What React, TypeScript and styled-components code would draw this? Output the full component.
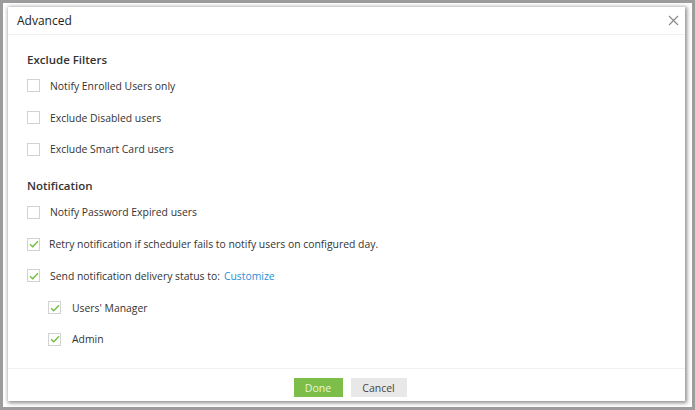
import styled, { createGlobalStyle } from 'styled-components';

const GlobalStyle = createGlobalStyle`
  html, body {
    margin: 0;
    padding: 0;
    width: 695px;
    height: 410px;
    overflow: hidden;
    background: #ffffff;
  }
  * { box-sizing: border-box; }
`;

const Frame = styled.div`
  width: 695px;
  height: 410px;
  border: 3px solid #9c9c9c;
  background: #ffffff;
  padding: 4px 7px 6px 5px;
  font-family: 'Open Sans', 'Noto Sans', sans-serif;
`;

const Dialog = styled.div`
  height: 100%;
  background: #ffffff;
  box-shadow: 1px 1px 4px 1px rgba(0, 0, 0, 0.45);
  display: flex;
  flex-direction: column;
`;

const Header = styled.div`
  height: 28px;
  border-bottom: 1px solid #f0f0f0;
  display: flex;
  align-items: center;
  justify-content: space-between;
  padding: 0 5px 0 9px;
`;

const Title = styled.span`
  font-size: 12px;
  color: #222;
`;

const Close = styled.span`
  width: 12px;
  height: 12px;
  display: flex;
  svg { display: block; }
`;

const Body = styled.div`
  flex: 1;
  padding: 15px 0 0 19px;
`;

const SectionTitle = styled.div`
  font-size: 11.5px;
  font-weight: 600;
  color: #333;
  height: 20px;
  line-height: 20px;
`;

const Section = styled.div`
  & + & { margin-top: 11px; }
`;

const Row = styled.label<{ $indent?: boolean }>`
  display: flex;
  align-items: center;
  height: 31.8px;
  padding-left: ${p => (p.$indent ? '21px' : '0')};
  font-size: 10.4px;
  color: #333;
`;

const Box = styled.span<{ $gap?: number }>`
  width: 13px;
  height: 13px;
  border: 1px solid #d2d2d2;
  background: #fff;
  margin-right: ${p => p.$gap ?? 10}px;
  display: flex;
  align-items: center;
  justify-content: center;
  flex: none;
`;

const Link = styled.a`
  color: #2a8fd6;
  margin-left: 4px;
  text-decoration: none;
`;

const Footer = styled.div`
  height: 33px;
  border-top: 1px solid #f0f0f0;
  display: flex;
  justify-content: center;
  align-items: flex-start;
  gap: 8px;
  padding: 9px 0 0 7px;
`;

const Button = styled.button<{ $primary?: boolean }>`
  height: 19px;
  border: none;
  font-family: inherit;
  font-size: 10.5px;
  padding: 0;
  width: ${p => (p.$primary ? '49px' : '56px')};
  background: ${p => (p.$primary ? '#7dbe4a' : '#e8e8e8')};
  color: ${p => (p.$primary ? '#e8f4dc' : '#444')};
`;

const Check = () => (
  <svg width="10" height="8" viewBox="0 0 10 8">
    <path d="M1 4.2 L3.7 6.8 L9 1.2" fill="none" stroke="#6cbf3a" strokeWidth="1.3" />
  </svg>
);

type Item = { label: React.ReactNode; checked?: boolean; indent?: boolean; gap?: number };

const CheckRow = ({ label, checked, indent, gap }: Item) => (
  <Row $indent={indent}>
    <Box $gap={gap}>{checked && <Check />}</Box>
    <span>{label}</span>
  </Row>
);

export default function App() {
  return (
    <>
      <GlobalStyle />
      <Frame>
        <Dialog>
          <Header>
            <Title>Advanced</Title>
            <Close>
              <svg width="11" height="11" viewBox="0 0 11 11">
                <path d="M1 1 L10 10 M10 1 L1 10" stroke="#8a8a8a" strokeWidth="1.2" />
              </svg>
            </Close>
          </Header>
          <Body>
            <Section>
              <SectionTitle>Exclude Filters</SectionTitle>
              <CheckRow label="Notify Enrolled Users only" />
              <CheckRow label="Exclude Disabled users" />
              <CheckRow label="Exclude Smart Card users" />
            </Section>
            <Section>
              <SectionTitle>Notification</SectionTitle>
              <CheckRow label="Notify Password Expired users" />
              <CheckRow checked gap={9} label="Retry notification if scheduler fails to notify users on configured day." />
              <CheckRow
                checked
                label={
                  <>
                    Send notification delivery status to:<Link>Customize</Link>
                  </>
                }
              />
              <CheckRow checked indent gap={11} label="Users' Manager" />
              <CheckRow checked indent gap={11} label="Admin" />
            </Section>
          </Body>
          <Footer>
            <Button $primary>Done</Button>
            <Button>Cancel</Button>
          </Footer>
        </Dialog>
      </Frame>
    </>
  );
}
